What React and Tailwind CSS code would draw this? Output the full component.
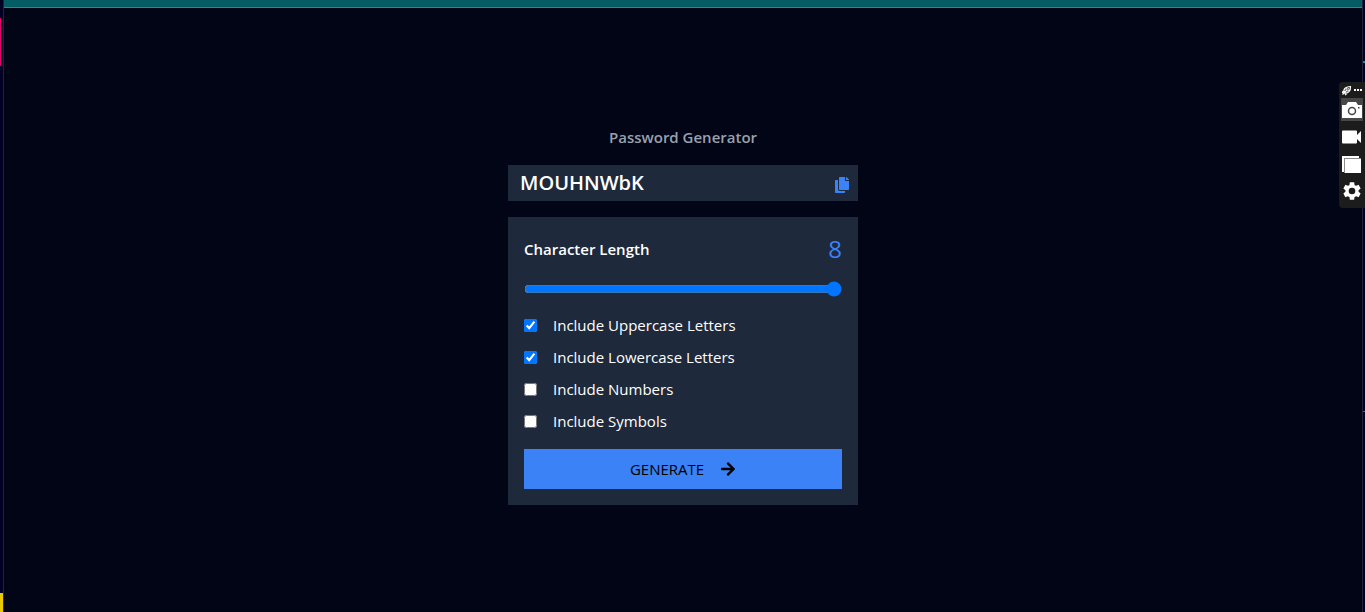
import { useState } from "react";
import { FaArrowRight, FaCopy } from "react-icons/fa";

const OPTIONS = [
  { id: "uppercase", label: "Include Uppercase Letters", chars: "ABCDEFGHIJKLMNOPQRSTUVWXYZ", on: true },
  { id: "lowercase", label: "Include Lowercase Letters", chars: "abcdefghijklmnopqrstuvwxyz", on: true },
  { id: "numbers", label: "Include Numbers", chars: "0123456789", on: false },
  { id: "symbols", label: "Include Symbols", chars: "!@#$%^&*()", on: false },
];

function PasswordGenerator() {
  const [password, setPassword] = useState("MOUHNWbK");
  const [length, setLength] = useState(8);
  const [enabled, setEnabled] = useState(OPTIONS.map((option) => option.on));

  const generate = () => {
    const pool = OPTIONS.filter((_, i) => enabled[i]).map((o) => o.chars).join("");
    let next = "";
    for (let i = 0; pool && i < length; i++) {
      next += pool[Math.floor(Math.random() * pool.length)];
    }
    setPassword(next);
  };

  return (
    <div className="flex w-full max-w-[350px] flex-col gap-4">
      <h1 className="text-center text-[15px] leading-6 font-semibold text-gray-400">Password Generator</h1>
      <div className="flex items-center justify-between bg-[#1e293b] px-2 py-1">
        <output className="pl-1 text-[20px] leading-7 font-semibold">{password}</output>
        <button type="button" aria-label="Copy password" className="pt-1 text-[#3b82f6]" onClick={() => navigator.clipboard?.writeText(password)}>
          <FaCopy size={16} />
        </button>
      </div>
      <div className="flex flex-col gap-4 bg-[#1e293b] p-4">
        <div className="flex items-center justify-between">
          <label htmlFor="length" className="text-[15px] leading-6 font-semibold">Character Length</label>
          <output htmlFor="length" className="text-[24px] leading-8 text-[#3b82f6]">{length}</output>
        </div>
        <input id="length" type="range" min="1" max="8" value={length} onChange={(e) => setLength(Number(e.target.value))} className="h-4 w-full" />
        <div className="flex flex-col gap-2">
          {OPTIONS.map((option, i) => (
            <div key={option.id} className="flex items-center gap-4">
              <input
                id={option.id}
                type="checkbox"
                checked={enabled[i]}
                onChange={() => setEnabled(enabled.map((on, j) => (i === j ? !on : on)))}
                className="size-[13px]"
              />
              <label htmlFor={option.id} className="text-[15px] leading-6">{option.label}</label>
            </div>
          ))}
        </div>
        <button type="button" onClick={generate} className="flex items-center justify-center gap-4 bg-[#3b82f6] py-2 text-[15px] leading-6 text-black">
          GENERATE
          <FaArrowRight size={16} />
        </button>
      </div>
    </div>
  );
}

function CaptureToolbar() {
  return (
    <aside aria-label="Capture tools" className="absolute top-[82px] right-0 flex w-[26px] flex-col items-center rounded-l bg-[#1c1c1c] pb-[3px]">
      <div className="flex h-4 items-center gap-px">
        <svg width="11" height="11" viewBox="0 0 11 11" fill="none" stroke="#ffffff" aria-hidden="true">
          <path d="M3 7.500C2 3.500 5.500 1.500 9.500 1.500 9.800 5.500 7 9 3.500 8M1.500 9.500 6.500 4.500M2 6 1.500 8M5.500 9 4 10" strokeWidth="1.200" />
          <circle cx="6.500" cy="4.500" r="1.500" />
        </svg>
        <svg width="10" height="4" viewBox="0 0 10 4" fill="#ffffff" aria-hidden="true">
          <path d="M1 1h2v2H1zM4 1h2v2H4zM7 1h2v2H7z" />
        </svg>
      </div>
      <button type="button" aria-label="Take screenshot" className="flex h-[23px] w-[22px] items-center justify-center bg-[#474747]">
        <svg width="20" height="18" viewBox="0 0 20 18">
          <path fill="#ffffff" d="M0 4h4l2-3h8l2 3h4v13H0z" />
          <circle cx="10" cy="10" r="3.500" fill="#ffffff" stroke="#474747" strokeWidth="1.500" />
          <path fill="#474747" d="M16 6h1.500v1.500H16z" />
        </svg>
      </button>
      <button type="button" aria-label="Record video" className="flex h-8 items-center">
        <svg width="20" height="14" viewBox="0 0 20 14" fill="#ffffff">
          <path d="M0 1.500Q0 .5 1 .5h13q1 0 1 1V5l4-4v12l-4-4v3.500q0 1-1 1H1q-1 0-1-1z" />
        </svg>
      </button>
      <button type="button" aria-label="Gallery" className="flex h-6 items-center">
        <svg width="20" height="18" viewBox="0 0 20 18">
          <path fill="#ffffff" d="M0 0h17v3H3v13H0z" />
          <path fill="#8c8c8c" d="M2 2h17v1H3v14H2z" />
          <path fill="#ffffff" d="M3 3h16v14H3z" />
        </svg>
      </button>
      <button type="button" aria-label="Settings" className="flex h-7 items-center">
        <svg width="22" height="22" viewBox="0 0 24 24" fill="#ffffff">
          <path d="M19.140 12.940c.040-.300.060-.610.060-.940s-.020-.640-.070-.940l2.030-1.580c.180-.140.230-.410.120-.610l-1.920-3.320c-.120-.220-.370-.290-.590-.220l-2.390.960c-.500-.380-1.030-.700-1.620-.940l-.360-2.540c-.040-.240-.240-.410-.480-.410h-3.840c-.240 0-.430.170-.470.410l-.360 2.540c-.590.240-1.130.570-1.620.940l-2.390-.960c-.220-.080-.470 0-.590.220L2.740 8.870c-.120.210-.080.470.120.610l2.030 1.580c-.050.300-.090.630-.090.940s.020.640.070.940l-2.030 1.580c-.180.140-.230.410-.120.610l1.920 3.320c.120.220.370.290.590.220l2.390-.960c.500.380 1.030.700 1.620.940l.360 2.540c.050.240.240.410.480.410h3.840c.240 0 .440-.170.470-.410l.360-2.540c.590-.240 1.130-.560 1.620-.940l2.390.960c.220.080.470 0 .590-.220l1.920-3.320c.120-.220.070-.470-.120-.610zM12 15.600A3.600 3.600 0 1 1 12 8.400a3.600 3.600 0 0 1 0 7.200z" />
        </svg>
      </button>
    </aside>
  );
}

export default function App() {
  return (
    <div className="relative flex min-h-screen bg-[#020515] font-['Open_Sans','Noto_Sans',sans-serif] text-white">
      <div className="flex w-[3px] flex-col bg-[#020024]" aria-hidden="true">
        <div className="mt-[18px] h-12 w-px bg-[#e6006b]" />
        <div className="mt-auto h-[19px] bg-[#e8c800]" />
      </div>
      <div className="flex flex-1 flex-col border-x border-[#222338]">
        <div className="h-2 border-b border-[#3b8589] bg-[#035d63]" />
        <main className="flex flex-1 flex-col items-center justify-center px-4 pt-[10px]">
          <PasswordGenerator />
        </main>
      </div>
      <div className="flex w-[2px] flex-col bg-[#020024]" aria-hidden="true">
        <div className="mt-[61px] h-[2px] bg-[#0b9298]" />
        <div className="mt-[348px] h-px bg-[#a8451f]" />
      </div>
      <CaptureToolbar />
    </div>
  );
}
